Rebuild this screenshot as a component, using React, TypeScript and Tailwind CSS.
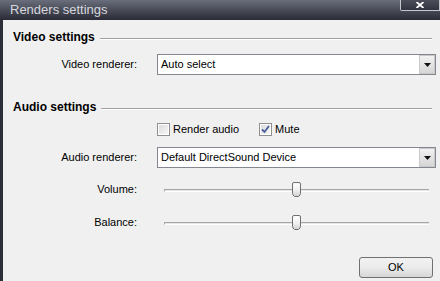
import React from 'react';

const font = { fontFamily: '"Liberation Sans", Arial, sans-serif' };

function SectionHeader({ title }: { title: string }) {
  return (
    <div className="flex items-center h-[14px]">
      <span className="text-[12px] font-bold text-black leading-[14px]">{title}</span>
      <div className="flex-1 ml-[5px] mr-[8px] mt-[4px] border-t border-t-[#a0a0a0] border-b border-b-white" />
    </div>
  );
}

function Combo({ value }: { value: string }) {
  return (
    <div className="flex h-[21px] w-[279px] border border-[#828790] bg-white">
      <div className="flex-1 flex items-center pl-[3px] text-[11px] text-black">{value}</div>
      <div className="w-[16px] flex items-center justify-center border border-[#c9c9c9] bg-gradient-to-b from-[#f2f2f2] to-[#d6d6d6]">
        <svg width="7" height="4" viewBox="0 0 7 4">
          <path d="M0 0H7L3.5 4Z" fill="#111" />
        </svg>
      </div>
    </div>
  );
}

function Check({ checked, label }: { checked?: boolean; label: string }) {
  return (
    <div className="flex items-center gap-[3px]">
      <div className="w-[13px] h-[13px] border border-[#8e8f8f] bg-white p-[1px]">
        <div className="w-full h-full bg-gradient-to-br from-[#dcdcdc] to-[#f6f6f6] flex items-center justify-center">
          {checked && (
            <svg width="9" height="9" viewBox="0 0 9 9">
              <path d="M1 4.5L3.5 7L8 1" stroke="#4a5f9c" strokeWidth="1.8" fill="none" />
            </svg>
          )}
        </div>
      </div>
      <span className="text-[11px] text-black leading-[13px]">{label}</span>
    </div>
  );
}

function Slider() {
  return (
    <div className="relative w-[279px] h-[15px] flex items-center px-[7px]">
      <div className="w-full h-[3px] mt-[2px] border-t border-t-[#a6a6a6] border-b border-b-white bg-[#e6e6e6] border-l border-l-[#a6a6a6]" />
      <svg className="absolute left-[135px] top-0" width="9" height="15" viewBox="0 0 9 15">
        <defs>
          <linearGradient id="th" x1="0" y1="0" x2="0" y2="1">
            <stop offset="0" stopColor="#ffffff" />
            <stop offset="0.55" stopColor="#f0f0f0" />
            <stop offset="1" stopColor="#cfcfcf" />
          </linearGradient>
        </defs>
        <path d="M2 0.5H7Q8.5 0.5 8.5 2V11.5Q8.5 13 6.5 14.5H2.5Q0.5 13 0.5 11.5V2Q0.5 0.5 2 0.5Z" fill="url(#th)" stroke="#6f6f6f" />
      </svg>
    </div>
  );
}

function Row({ label, children }: { label: string; children: React.ReactNode }) {
  return (
    <div className="flex items-center">
      <div className="w-[124px] text-right text-[11px] leading-[13px] text-black">{label}</div>
      <div className="ml-[20px] flex">{children}</div>
    </div>
  );
}

export default function App() {
  return (
    <div className="w-[440px] h-[281px] overflow-hidden flex flex-col bg-[#f0f0f0]" style={font}>
      {/* Title bar */}
      <div className="h-[20px] flex justify-between bg-gradient-to-b from-[#6a6e7c] to-[#2a2b36]">
        <span className="pl-[10px] text-[13px] leading-[19px] text-[#d6d8de]">Renders settings</span>
        <div className="w-[40px] h-[11px] border border-t-0 border-[#c4c6cc] rounded-bl-[2px] bg-gradient-to-b from-[#4b4e5a] to-[#33343f] flex items-end justify-center pb-[2px]">
          <svg width="8" height="6" viewBox="0 0 8 6">
            <path d="M0.5 0L7.5 6M7.5 0L0.5 6" stroke="#fff" strokeWidth="1.8" />
          </svg>
        </div>
      </div>

      {/* Body */}
      <div className="flex-1 flex border-l-[3px] border-l-[#2c2e38]">
        <div className="flex-1 flex flex-col pl-[10px] pt-[10px]">
          <SectionHeader title="Video settings" />
          <div className="mt-[10px]">
            <Row label="Video renderer:">
              <Combo value="Auto select" />
            </Row>
          </div>

          <div className="mt-[25px]">
            <SectionHeader title="Audio settings" />
          </div>
          <div className="mt-[9px] flex gap-[20px] ml-[144px]">
            <Check label="Render audio" />
            <Check checked label="Mute" />
          </div>
          <div className="mt-[11px]">
            <Row label="Audio renderer:">
              <Combo value="Default DirectSound Device" />
            </Row>
          </div>
          <div className="mt-[14px]">
            <Row label="Volume:">
              <Slider />
            </Row>
          </div>
          <div className="mt-[18px]">
            <Row label="Balance:">
              <Slider />
            </Row>
          </div>
          <div className="mt-[27px] flex justify-end pr-[7px]">
            <button className="w-[74px] h-[21px] rounded-[3px] border border-[#707070] bg-gradient-to-b from-[#f2f2f2] via-[#ebebeb] to-[#d6d6d6] text-[11px] text-black">
              OK
            </button>
          </div>
        </div>
      </div>
    </div>
  );
}
